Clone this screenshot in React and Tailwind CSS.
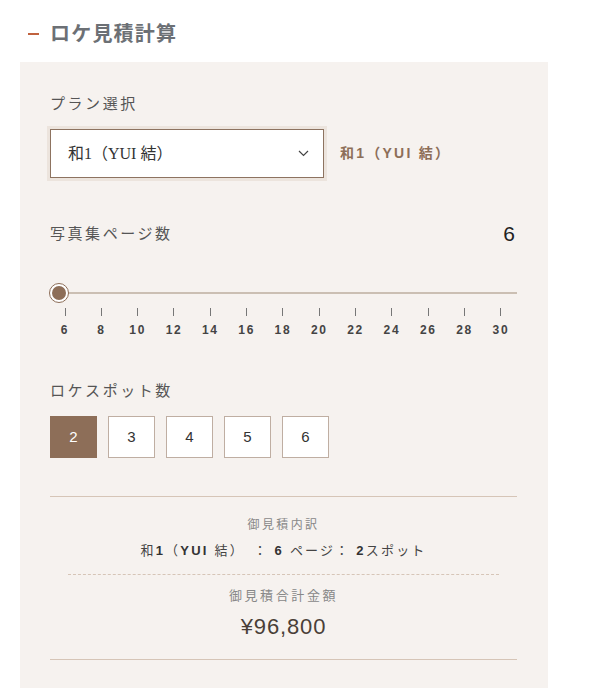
import { useState } from 'react'

const font = { fontFamily: '"Liberation Sans", "Noto Sans CJK JP", sans-serif' }
const serif = { fontFamily: '"Liberation Serif", "Noto Sans CJK JP", serif' }

const TICKS = [6, 8, 10, 12, 14, 16, 18, 20, 22, 24, 26, 28, 30]
const SPOTS = [2, 3, 4, 5, 6]

export default function App() {
  const [spot, setSpot] = useState(2)
  const pages = 6

  return (
    <div className="w-[596px] h-[688px] overflow-hidden bg-white" style={font}>
      <div className="flex items-center pl-[28px] pt-[22px] h-[62px] pb-[16px]">
        <div className="w-[11px] h-[2px] bg-[#c0623e]" />
        <h1 className="ml-[11px] text-[20px] leading-[24px] font-bold text-[#6c7075] tracking-[0.06em]">
          ロケ見積計算
        </h1>
      </div>

      <section className="ml-[20px] w-[528px] h-[640px] bg-[#f6f2ef] pl-[30px] pr-[31px] pt-[31px]">
        <div className="text-[15px] leading-[22px] text-[#555] tracking-[0.17em]">プラン選択</div>
        <div className="mt-[14px] flex items-center">
          <div className="w-[274px] h-[49px] bg-white border border-[#8d7360] ring-[3px] ring-[#ece4dd] flex items-center justify-between pl-[17px] pr-[14px]">
            <span className="text-[16px] text-[#333]" style={serif}>和1（YUI 結）</span>
            <svg width="11" height="7" viewBox="0 0 11 7" fill="none">
              <path d="M1 1l4.5 4.5L10 1" stroke="#444" strokeWidth="1.2" />
            </svg>
          </div>
          <div className="ml-[16px] text-[14px] font-bold text-[#8d6e58] tracking-[0.16em]">和1（YUI 結）</div>
        </div>

        <div className="mt-[45px] flex items-center justify-between">
          <div className="text-[15px] leading-[22px] text-[#555] tracking-[0.17em]">写真集ページ数</div>
          <div className="text-[21px] leading-[22px] text-[#222] pr-[2px]">{pages}</div>
        </div>

        <div className="mt-[38px] relative h-[20px] flex items-center">
          <div className="w-full h-[2px] bg-[#cbbfb3]" />
          <div className="absolute left-[-1px] top-0 w-[20px] h-[20px] rounded-full bg-white border border-[#8d6e58] p-[2px]">
            <div className="w-full h-full rounded-full bg-[#8d6e58]" />
          </div>
        </div>

        <div className="mt-[5px] flex justify-between pl-[15px] pr-[16px]">
          {TICKS.map(t => (
            <div key={t} className="w-0 flex flex-col items-center">
              <div className="w-px h-[8px] bg-[#777]" />
              <div className="mt-[6px] text-[12px] leading-[16px] font-bold text-[#444] tracking-[0.14em] whitespace-nowrap">{t}</div>
            </div>
          ))}
        </div>

        <div className="mt-[42px] text-[15px] leading-[22px] text-[#555] tracking-[0.17em]">ロケスポット数</div>
        <div className="mt-[14px] flex gap-[11px]">
          {SPOTS.map(s => (
            <button
              key={s}
              onClick={() => setSpot(s)}
              className={
                s === spot
                  ? 'w-[47px] h-[42px] bg-[#8d6e58] text-white text-[15px] border border-[#8d6e58]'
                  : 'w-[47px] h-[42px] bg-white text-[#333] text-[15px] border border-[#bfaea2]'
              }
            >
              {s}
            </button>
          ))}
        </div>

        <div className="mt-[38px] border-y border-[#d6c5b7] bg-[#f6f2ef] pt-[19px] pb-[18px] px-[18px] text-center">
          <div className="text-[12px] leading-[18px] text-[#888] tracking-[0.2em]">御見積内訳</div>
          <div className="mt-[7px] text-[13px] leading-[20px] text-[#444] tracking-[0.17em]">
            和<b className="text-[#333]">1</b>（<b className="text-[#333]">YUI</b> 結）　：<b className="text-[#333]"> 6 </b>ページ：<b className="text-[#333]"> 2</b>スポット
          </div>
          <div className="mt-[13px] border-t border-dashed border-[#d6c5b7] pt-[12px]">
            <div className="text-[13px] leading-[18px] text-[#888] tracking-[0.2em]">御見積合計金額</div>
            <div className="mt-[8px] text-[22px] leading-[28px] text-[#4a3f38] tracking-[0.04em]">¥96,800</div>
          </div>
        </div>
      </section>
    </div>
  )
}
